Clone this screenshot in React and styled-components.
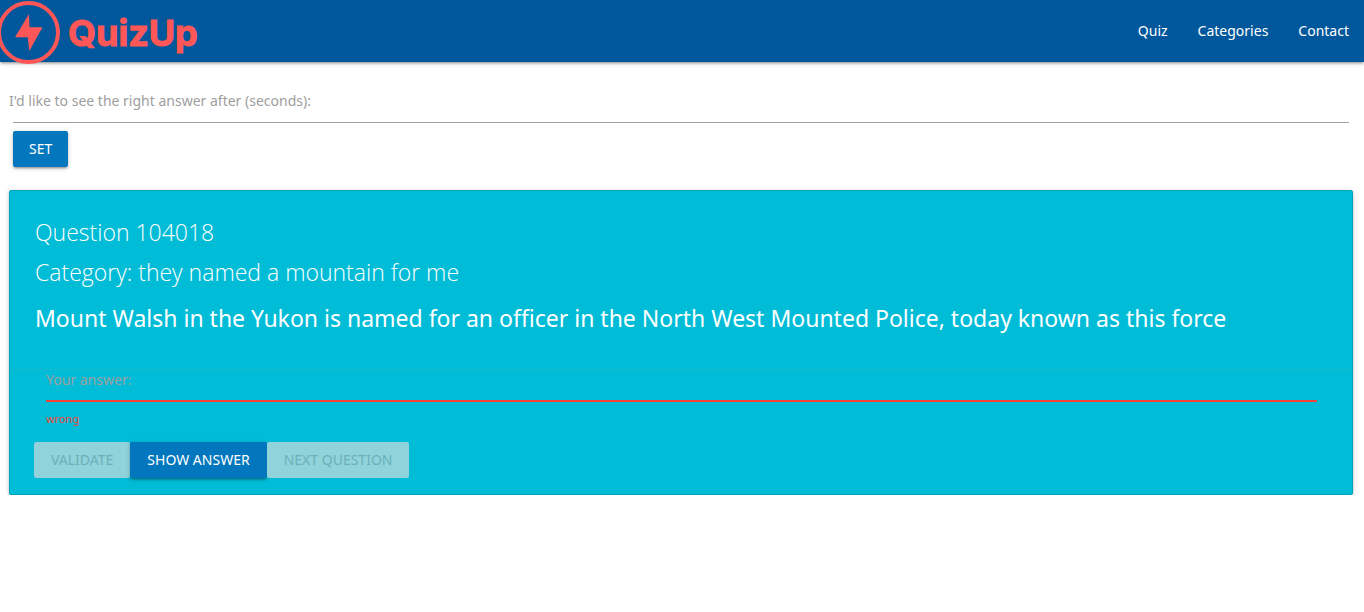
import React from "react";
import styled, { createGlobalStyle } from "styled-components";

const GlobalStyle = createGlobalStyle`
  *, *::before, *::after { box-sizing: border-box; }
  body {
    margin: 0;
    background: #fff;
    font-family: "Segoe UI", "Noto Sans", "Open Sans", sans-serif;
    font-size: 14px;
    line-height: 20px;
  }
`;

const raised = "0 2px 2px 0 rgba(0,0,0,0.14), 0 3px 1px -2px rgba(0,0,0,0.12), 0 1px 5px 0 rgba(0,0,0,0.2)";

const NavBar = styled.header`
  display: flex;
  justify-content: space-between;
  height: 62px;
  background: #01579b;
  box-shadow: ${raised};
`;

const LogoLink = styled.a`
  display: block;
  height: 64px;
`;

const LogoArt = styled.svg`
  display: block;
  width: 204px;
  height: 64px;
`;

const NavLinks = styled.nav`
  display: flex;
`;

const NavLink = styled.a`
  padding: 0 15px;
  line-height: 62px;
  color: #fff;
  text-decoration: none;
`;

const DelayForm = styled.form`
  display: flex;
  flex-direction: column;
  align-items: flex-start;
  padding: 29px 15px 0 13px;
`;

const DelayLabel = styled.label`
  margin-left: -4px;
  color: #9e9e9e;
`;

const TextInput = styled.input`
  display: block;
  width: 100%;
  height: 12px;
  padding: 0;
  border: 0;
  border-bottom: ${(p) => (p.$invalid ? "2px solid #f44336" : "1px solid #9e9e9e")};
  background: transparent;
  outline: none;
  font: inherit;
`;

const Button = styled.button`
  height: 36px;
  padding: 0 16px;
  border: 0;
  border-radius: 2px;
  background: #0277bd;
  box-shadow: ${raised};
  color: #fff;
  font: inherit;
  font-size: 14px;
  text-transform: uppercase;

  &:disabled {
    background: #90d3db;
    box-shadow: none;
    color: #6cb0b8;
  }
`;

const SetButton = styled(Button)`
  margin-top: 8px;
`;

const Card = styled.section`
  margin: 23px 11px 0 9px;
  border: 1px solid #00a5bb;
  border-radius: 2px;
  background: #00bcd7;
  box-shadow: ${raised};
`;

const CardContent = styled.div`
  padding: 21px 25px 31px;
  color: #fff;
`;

const CardTitle = styled.h2`
  margin: 0;
  font-family: "Segoe UI", "Open Sans", sans-serif;
  font-size: 23px;
  font-weight: 300;
  line-height: 40px;
`;

const Clue = styled.p`
  margin: 6px 0 0;
  font-size: 23px;
  line-height: 40px;
`;

const CardAction = styled.form`
  padding: 0 24px 16px;
  border-top: 1px solid rgba(160, 160, 160, 0.15);
`;

const AnswerField = styled.div`
  padding: 0 11px 0 12px;
`;

const AnswerLabel = styled.label`
  display: block;
  color: #9e9e9e;
`;

const ErrorText = styled.p`
  margin: 9px 0 0;
  color: #f44336;
  font-size: 11px;
  line-height: 16px;
`;

const ButtonRow = styled.div`
  display: flex;
  margin-top: 15px;

  ${Button} {
    padding: 0 17px;
  }
`;

function Logo() {
  return (
    <LogoArt viewBox="0 0 204 64" role="img" aria-label="QuizUp">
      <circle cx="28.5" cy="32.5" r="29.5" fill="none" stroke="#ff5757" strokeWidth="4" />
      <path d="M29 14 L15 37.3 H27.8 L29.3 51 L42.5 27.3 H29.5 Z" fill="#ff5757" />
      <text x="68" y="46" fill="#ff5757" stroke="#ff5757" strokeWidth="1" fontFamily="Inter, sans-serif" fontWeight="700" fontSize="36">
        QuizUp
      </text>
    </LogoArt>
  );
}

export default function App() {
  return (
    <>
      <GlobalStyle />
      <NavBar>
        <LogoLink href="#home"><Logo /></LogoLink>
        <NavLinks>
          <NavLink href="#quiz">Quiz</NavLink>
          <NavLink href="#categories">Categories</NavLink>
          <NavLink href="#contact">Contact</NavLink>
        </NavLinks>
      </NavBar>
      <main>
        <DelayForm onSubmit={(e) => e.preventDefault()}>
          <DelayLabel htmlFor="delay">I'd like to see the right answer after (seconds):</DelayLabel>
          <TextInput id="delay" type="text" />
          <SetButton type="submit">Set</SetButton>
        </DelayForm>
        <Card>
          <CardContent>
            <CardTitle>Question 104018</CardTitle>
            <CardTitle>Category: they named a mountain for me</CardTitle>
            <Clue>Mount Walsh in the Yukon is named for an officer in the North West Mounted Police, today known as this force</Clue>
          </CardContent>
          <CardAction onSubmit={(e) => e.preventDefault()}>
            <AnswerField>
              <AnswerLabel htmlFor="answer">Your answer:</AnswerLabel>
              <TextInput id="answer" type="text" $invalid aria-invalid="true" aria-describedby="answer-error" />
              <ErrorText id="answer-error">wrong</ErrorText>
            </AnswerField>
            <ButtonRow>
              <Button type="submit" disabled>Validate</Button>
              <Button type="button">Show answer</Button>
              <Button type="button" disabled>Next question</Button>
            </ButtonRow>
          </CardAction>
        </Card>
      </main>
    </>
  );
}
